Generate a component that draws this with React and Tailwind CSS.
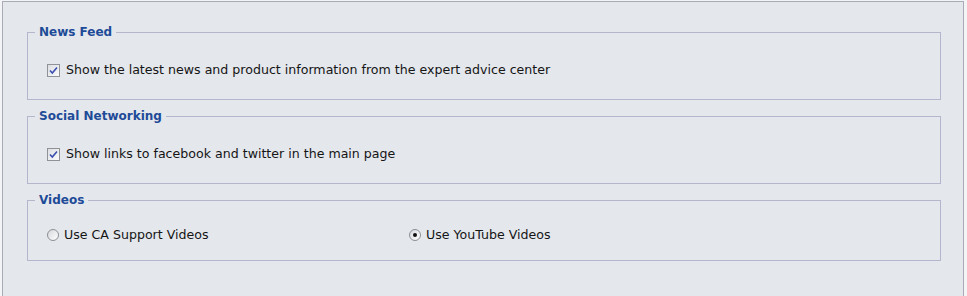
import React, { useState } from 'react';

const font = { fontFamily: '"DejaVu Sans", Verdana, sans-serif' };

function CheckBox({ checked, onChange }) {
  return (
    <span
      onClick={onChange}
      className="inline-flex items-center justify-center w-[13px] h-[13px] border border-[#8f9296] bg-gradient-to-br from-[#dcdee2] to-[#fbfbfc] shrink-0"
    >
      {checked && (
        <svg width="9" height="9" viewBox="0 0 9 9">
          <path d="M1 4.5 L3.3 7 L8 1.5" fill="none" stroke="#3b4fb0" strokeWidth="1.6" />
        </svg>
      )}
    </span>
  );
}

function Radio({ checked, onChange }) {
  return (
    <span
      onClick={onChange}
      className="inline-flex items-center justify-center w-[12px] h-[12px] rounded-full border border-[#8c8f93] bg-gradient-to-br from-[#d6d8dc] to-white shrink-0"
    >
      {checked && <span className="w-[4px] h-[4px] rounded-full bg-[#111]" />}
    </span>
  );
}

function Group({ title, children, pt, pb }) {
  return (
    <fieldset className={`border border-[#b4b7cb] px-[7px] ${pt} ${pb}`}>
      <legend className="px-[4px] text-[12px] leading-[16px] font-bold text-[#1e4b98]">{title}</legend>
      {children}
    </fieldset>
  );
}

export default function App() {
  const [news, setNews] = useState(true);
  const [social, setSocial] = useState(true);
  const [video, setVideo] = useState('youtube');

  return (
    <div className="w-[967px] h-[296px] overflow-hidden bg-[#f3f4f6] pl-[2px] pt-[1px]" style={font}>
      <div className="w-[962px] h-[320px] border border-[#a9acb6] bg-[#e4e7ec] pl-[24px] pr-[22px] pt-[22px] flex flex-col gap-[8px] text-[12.6px] text-[#151515]">
        <Group title="News Feed" pt="pt-[22px]" pb="pb-[21px]">
          <label className="flex items-center gap-[6px] pl-[12px] h-[16px]">
            <CheckBox checked={news} onChange={() => setNews(!news)} />
            <span>Show the latest news and product information from the expert advice center</span>
          </label>
        </Group>

        <Group title="Social Networking" pt="pt-[22px]" pb="pb-[21px]">
          <label className="flex items-center gap-[6px] pl-[12px] h-[16px]">
            <CheckBox checked={social} onChange={() => setSocial(!social)} />
            <span>Show links to facebook and twitter in the main page</span>
          </label>
        </Group>

        <Group title="Videos" pt="pt-[19px]" pb="pb-[17px]">
          <div className="flex items-center h-[16px] pl-[12px]">
            <label className="flex items-center gap-[5px] w-[362px]">
              <Radio checked={video === 'ca'} onChange={() => setVideo('ca')} />
              <span>Use CA Support Videos</span>
            </label>
            <label className="flex items-center gap-[5px]">
              <Radio checked={video === 'youtube'} onChange={() => setVideo('youtube')} />
              <span>Use YouTube Videos</span>
            </label>
          </div>
        </Group>
      </div>
    </div>
  );
}
